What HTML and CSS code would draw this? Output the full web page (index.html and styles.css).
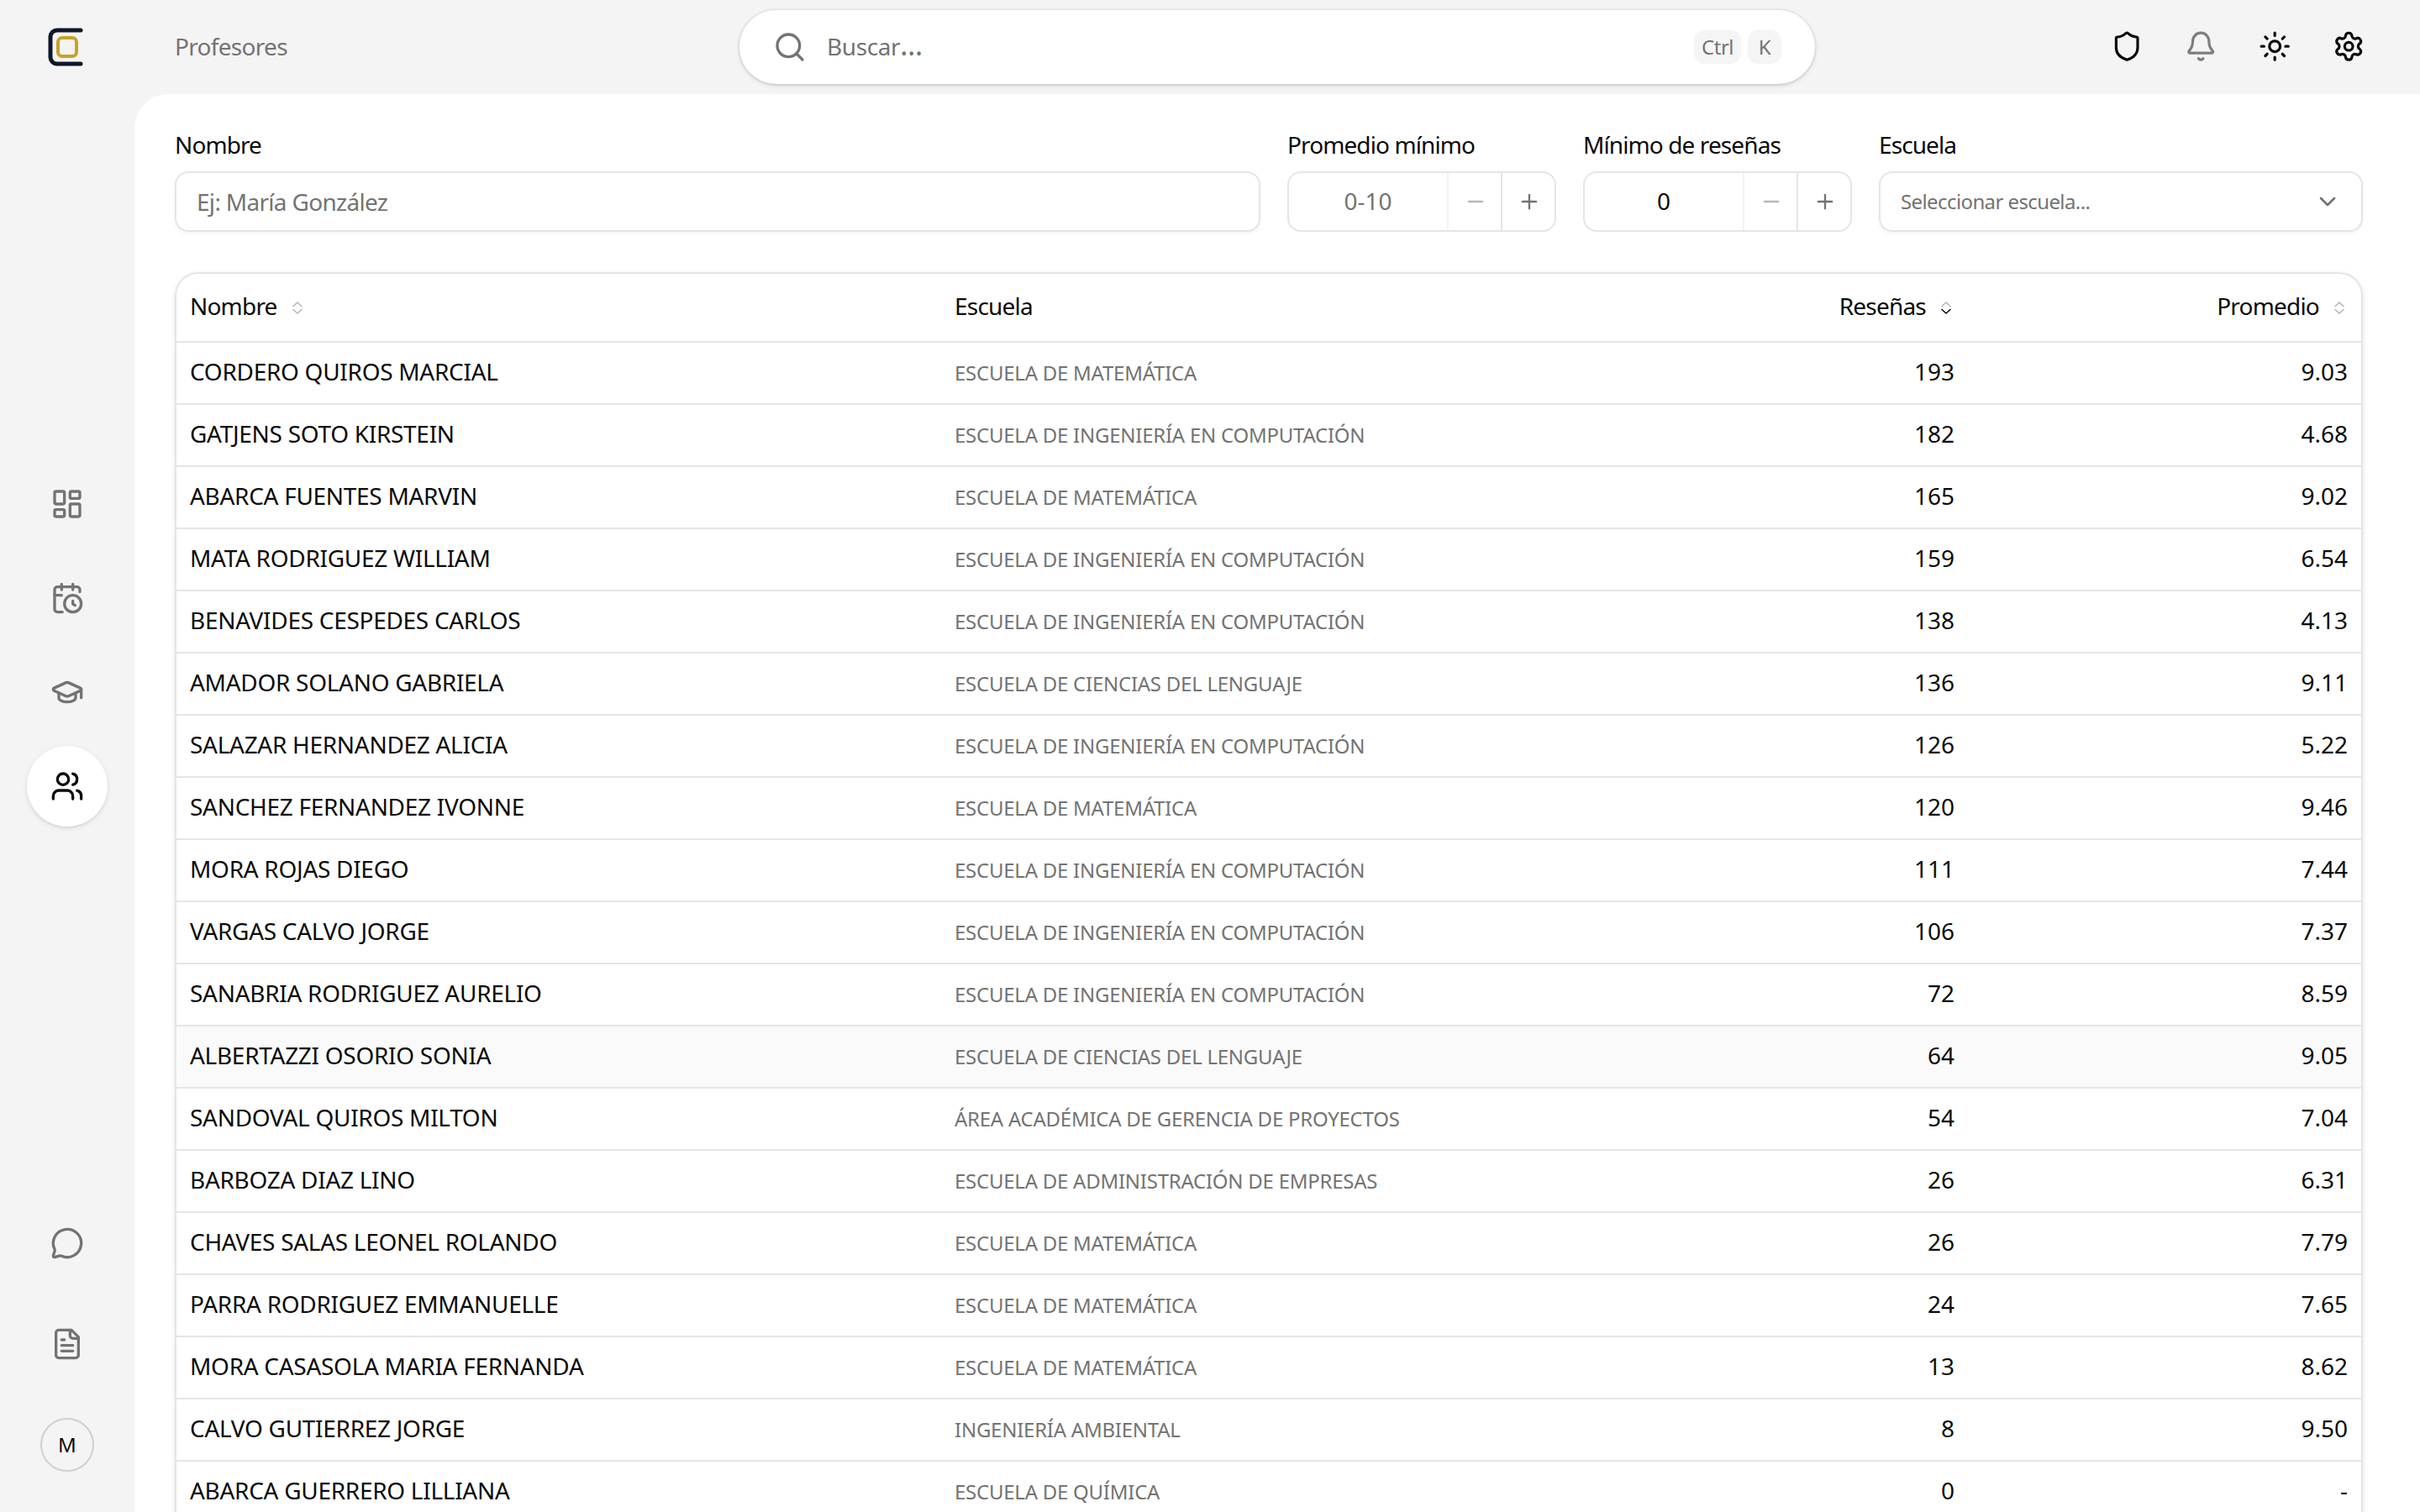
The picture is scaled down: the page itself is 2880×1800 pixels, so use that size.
FILE: index.html
```
<!DOCTYPE html>
<html lang="es">
<head>
    <meta charset="UTF-8">
    <meta name="viewport" content="width=device-width, initial-scale=1.0">
    <title>Profesores</title>
    <link rel="stylesheet" href="styles.css">
</head>
<body>
    <aside class="sidebar">
        <a class="logo" href="#">
            <svg width="48" height="48" viewBox="0 0 48 48" fill="none">
                <path d="M40 4H12a8 8 0 0 0-8 8v24a8 8 0 0 0 8 8h28" stroke="#0f172a" stroke-width="5" stroke-linecap="round"/>
                <rect x="13" y="13" width="22" height="22" rx="5" stroke="#c9a227" stroke-width="4"/>
            </svg>
        </a>
        <nav class="nav">
            <a class="nav-item" href="#">
                <svg class="icon" viewBox="0 0 24 24"><rect width="7" height="9" x="3" y="3" rx="1"/><rect width="7" height="5" x="14" y="3" rx="1"/><rect width="7" height="9" x="14" y="12" rx="1"/><rect width="7" height="5" x="3" y="16" rx="1"/></svg>
            </a>
            <a class="nav-item" href="#">
                <svg class="icon" viewBox="0 0 24 24"><path d="M16 14v2.200l1.600 1"/><path d="M16 2v4"/><path d="M21 7.500V6a2 2 0 0 0-2-2H5a2 2 0 0 0-2 2v14a2 2 0 0 0 2 2h3.500"/><path d="M3 10h5"/><path d="M8 2v4"/><circle cx="16" cy="16" r="6"/></svg>
            </a>
            <a class="nav-item" href="#">
                <svg class="icon" viewBox="0 0 24 24"><path d="M21.420 10.922a1 1 0 0 0-.019-1.838L12.830 5.180a2 2 0 0 0-1.660 0L2.600 9.080a1 1 0 0 0 0 1.832l8.570 3.908a2 2 0 0 0 1.660 0z"/><path d="M22 10v6"/><path d="M6 12.500V16a6 3 0 0 0 12 0v-3.500"/></svg>
            </a>
            <a class="nav-item active" href="#">
                <svg class="icon" viewBox="0 0 24 24"><path d="M16 21v-2a4 4 0 0 0-4-4H6a4 4 0 0 0-4 4v2"/><path d="M16 3.128a4 4 0 0 1 0 7.744"/><path d="M22 21v-2a4 4 0 0 0-3-3.870"/><circle cx="9" cy="7" r="4"/></svg>
            </a>
        </nav>
        <div class="sidebar-bottom">
            <a class="nav-item" href="#">
                <svg class="icon" viewBox="0 0 24 24"><path d="M2.992 16.342a2 2 0 0 1 .094 1.167l-1.065 3.290a1 1 0 0 0 1.236 1.168l3.413-.998a2 2 0 0 1 1.099.092 10 10 0 1 0-4.777-4.719"/></svg>
            </a>
            <a class="nav-item" href="#">
                <svg class="icon" viewBox="0 0 24 24"><path d="M15 2H6a2 2 0 0 0-2 2v16a2 2 0 0 0 2 2h12a2 2 0 0 0 2-2V7Z"/><path d="M14 2v4a2 2 0 0 0 2 2h4"/><path d="M10 9H8"/><path d="M16 13H8"/><path d="M16 17H8"/></svg>
            </a>
            <div class="avatar">M</div>
        </div>
    </aside>

    <div class="page">
        <header class="topbar">
            <div class="title">Profesores</div>
            <div class="search">
                <svg class="icon" viewBox="0 0 24 24"><path d="m21 21-4.340-4.340"/><circle cx="11" cy="11" r="8"/></svg>
                <span class="search-text">Buscar<span class="dots">…</span></span>
                <kbd>Ctrl</kbd>
                <kbd>K</kbd>
            </div>
            <div class="actions">
                <svg class="icon" viewBox="0 0 24 24"><path d="M20 13c0 5-3.500 7.500-7.660 8.950a1 1 0 0 1-.67-.01C7.500 20.500 4 18 4 13V6a1 1 0 0 1 1-1c2 0 4.500-1.200 6.240-2.720a1.170 1.170 0 0 1 1.520 0C14.510 3.810 17 5 19 5a1 1 0 0 1 1 1z"/></svg>
                <svg class="icon muted" viewBox="0 0 24 24"><path d="M10.268 21a2 2 0 0 0 3.464 0"/><path d="M3.262 15.326A1 1 0 0 0 4 17h16a1 1 0 0 0 .74-1.673C19.410 13.956 18 12.499 18 8A6 6 0 0 0 6 8c0 4.499-1.411 5.956-2.738 7.326"/></svg>
                <svg class="icon" viewBox="0 0 24 24"><circle cx="12" cy="12" r="4"/><path d="M12 2v2"/><path d="M12 20v2"/><path d="m4.930 4.930 1.410 1.410"/><path d="m17.660 17.660 1.410 1.410"/><path d="M2 12h2"/><path d="M20 12h2"/><path d="m6.340 17.660-1.410 1.410"/><path d="m19.070 4.930-1.410 1.410"/></svg>
                <svg class="icon" viewBox="0 0 24 24"><path d="M9.671 4.136a2.340 2.340 0 0 1 4.659 0 2.340 2.340 0 0 0 3.319 1.915 2.340 2.340 0 0 1 2.330 4.033 2.340 2.340 0 0 0 0 3.831 2.340 2.340 0 0 1-2.330 4.033 2.340 2.340 0 0 0-3.319 1.915 2.340 2.340 0 0 1-4.659 0 2.340 2.340 0 0 0-3.320-1.915 2.340 2.340 0 0 1-2.330-4.033 2.340 2.340 0 0 0 0-3.831A2.340 2.340 0 0 1 6.350 6.051a2.340 2.340 0 0 0 3.319-1.915"/><circle cx="12" cy="12" r="3"/></svg>
            </div>
        </header>

        <main class="content">
            <div class="filters">
                <div class="field">
                    <label>Nombre</label>
                    <div class="control">Ej: María González</div>
                </div>
                <div class="field">
                    <label>Promedio mínimo</label>
                    <div class="control stepper">
                        <span class="value">0-10</span>
                        <button class="disabled"><svg class="icon" viewBox="0 0 24 24"><path d="M5 12h14"/></svg></button>
                        <button><svg class="icon" viewBox="0 0 24 24"><path d="M5 12h14"/><path d="M12 5v14"/></svg></button>
                    </div>
                </div>
                <div class="field">
                    <label>Mínimo de reseñas</label>
                    <div class="control stepper">
                        <span class="value filled">0</span>
                        <button class="disabled"><svg class="icon" viewBox="0 0 24 24"><path d="M5 12h14"/></svg></button>
                        <button><svg class="icon" viewBox="0 0 24 24"><path d="M5 12h14"/><path d="M12 5v14"/></svg></button>
                    </div>
                </div>
                <div class="field">
                    <label>Escuela</label>
                    <div class="control select">
                        <span>Seleccionar escuela...</span>
                        <svg class="icon" viewBox="0 0 24 24"><path d="m6 9 6 6 6-6"/></svg>
                    </div>
                </div>
            </div>

            <div class="table-card">
                <table>
                    <thead>
                        <tr>
                            <th class="col-name">Nombre<svg class="sort" viewBox="0 0 12 15"><path d="m.500 6 5.500-5 5.500 5"/><path d="m.500 9 5.500 5 5.500-5"/></svg></th>
                            <th class="col-school">Escuela</th>
                            <th class="col-num">Reseñas<svg class="sort" viewBox="0 0 12 15"><path d="m.500 6 5.500-5 5.500 5"/><path class="on" d="m.500 9 5.500 5 5.500-5"/></svg></th>
                            <th class="col-num">Promedio<svg class="sort" viewBox="0 0 12 15"><path d="m.500 6 5.500-5 5.500 5"/><path d="m.500 9 5.500 5 5.500-5"/></svg></th>
                        </tr>
                    </thead>
                    <tbody>
                        <tr><td>CORDERO QUIROS MARCIAL</td><td>ESCUELA DE MATEMÁTICA</td><td>193</td><td>9.03</td></tr>
                        <tr><td>GATJENS SOTO KIRSTEIN</td><td>ESCUELA DE INGENIERÍA EN COMPUTACIÓN</td><td>182</td><td>4.68</td></tr>
                        <tr><td>ABARCA FUENTES MARVIN</td><td>ESCUELA DE MATEMÁTICA</td><td>165</td><td>9.02</td></tr>
                        <tr><td>MATA RODRIGUEZ WILLIAM</td><td>ESCUELA DE INGENIERÍA EN COMPUTACIÓN</td><td>159</td><td>6.54</td></tr>
                        <tr><td>BENAVIDES CESPEDES CARLOS</td><td>ESCUELA DE INGENIERÍA EN COMPUTACIÓN</td><td>138</td><td>4.13</td></tr>
                        <tr><td>AMADOR SOLANO GABRIELA</td><td>ESCUELA DE CIENCIAS DEL LENGUAJE</td><td>136</td><td>9.11</td></tr>
                        <tr><td>SALAZAR HERNANDEZ ALICIA</td><td>ESCUELA DE INGENIERÍA EN COMPUTACIÓN</td><td>126</td><td>5.22</td></tr>
                        <tr><td>SANCHEZ FERNANDEZ IVONNE</td><td>ESCUELA DE MATEMÁTICA</td><td>120</td><td>9.46</td></tr>
                        <tr><td>MORA ROJAS DIEGO</td><td>ESCUELA DE INGENIERÍA EN COMPUTACIÓN</td><td>111</td><td>7.44</td></tr>
                        <tr><td>VARGAS CALVO JORGE</td><td>ESCUELA DE INGENIERÍA EN COMPUTACIÓN</td><td>106</td><td>7.37</td></tr>
                        <tr><td>SANABRIA RODRIGUEZ AURELIO</td><td>ESCUELA DE INGENIERÍA EN COMPUTACIÓN</td><td>72</td><td>8.59</td></tr>
                        <tr class="hovered"><td>ALBERTAZZI OSORIO SONIA</td><td>ESCUELA DE CIENCIAS DEL LENGUAJE</td><td>64</td><td>9.05</td></tr>
                        <tr><td>SANDOVAL QUIROS MILTON</td><td>ÁREA ACADÉMICA DE GERENCIA DE PROYECTOS</td><td>54</td><td>7.04</td></tr>
                        <tr><td>BARBOZA DIAZ LINO</td><td>ESCUELA DE ADMINISTRACIÓN DE EMPRESAS</td><td>26</td><td>6.31</td></tr>
                        <tr><td>CHAVES SALAS LEONEL ROLANDO</td><td>ESCUELA DE MATEMÁTICA</td><td>26</td><td>7.79</td></tr>
                        <tr><td>PARRA RODRIGUEZ EMMANUELLE</td><td>ESCUELA DE MATEMÁTICA</td><td>24</td><td>7.65</td></tr>
                        <tr><td>MORA CASASOLA MARIA FERNANDA</td><td>ESCUELA DE MATEMÁTICA</td><td>13</td><td>8.62</td></tr>
                        <tr><td>CALVO GUTIERREZ JORGE</td><td>INGENIERÍA AMBIENTAL</td><td>8</td><td>9.50</td></tr>
                        <tr><td>ABARCA GUERRERO LILLIANA</td><td>ESCUELA DE QUÍMICA</td><td>0</td><td>-</td></tr>
                    </tbody>
                </table>
            </div>
        </main>
    </div>
</body>
</html>
```

FILE: styles.css
```
* {
    box-sizing: border-box;
    margin: 0;
    padding: 0;
}

body {
    display: flex;
    height: 1800px;
    overflow: hidden;
    background-color: #f4f4f4;
    color: #0a0a0a;
    font-family: "Noto Sans", sans-serif;
    font-size: 28px;
    line-height: 40px;
    letter-spacing: -0.7px;
}

a {
    color: inherit;
    text-decoration: none;
}

.icon {
    width: 40px;
    height: 40px;
    flex-shrink: 0;
    fill: none;
    stroke: currentColor;
    stroke-width: 2;
    stroke-linecap: round;
    stroke-linejoin: round;
}

.muted {
    opacity: 0.5;
}

/* Sidebar */
.sidebar {
    display: flex;
    flex-direction: column;
    align-items: center;
    width: 160px;
    flex-shrink: 0;
    color: #737373;
}

.logo {
    display: flex;
    align-items: center;
    justify-content: center;
    height: 112px;
}

.nav {
    display: flex;
    flex-direction: column;
    gap: 16px;
    margin-top: 440px;
}

.nav-item {
    display: flex;
    align-items: center;
    justify-content: center;
    width: 96px;
    height: 96px;
    border-radius: 50%;
}

.nav-item.active {
    background-color: #fff;
    color: #0a0a0a;
    box-shadow: 0 2px 6px rgba(0, 0, 0, 0.1), 0 2px 4px -2px rgba(0, 0, 0, 0.1);
}

.sidebar-bottom {
    display: flex;
    flex-direction: column;
    align-items: center;
    gap: 24px;
    margin-top: auto;
    padding-bottom: 48px;
}

.avatar {
    display: flex;
    align-items: center;
    justify-content: center;
    width: 64px;
    height: 64px;
    margin-top: 16px;
    border: 2px solid #d0d0d0;
    border-radius: 50%;
    color: #0a0a0a;
    font-size: 24px;
    letter-spacing: 0;
}

/* Top bar */
.page {
    display: flex;
    flex-direction: column;
    flex: 1;
    min-width: 0;
}

.topbar {
    display: grid;
    grid-template-columns: 1fr 1280px 1fr;
    align-items: center;
    height: 112px;
    flex-shrink: 0;
    padding: 0 48px;
}

.title {
    padding-bottom: 3px;
    color: #737373;
}

.search {
    display: flex;
    align-items: center;
    height: 88px;
    padding: 0 40px;
    border-radius: 44px;
    background-color: #fff;
    color: #737373;
    box-shadow: 0 0 0 2px rgba(0, 0, 0, 0.04), 0 2px 6px rgba(0, 0, 0, 0.1), 0 2px 4px -2px rgba(0, 0, 0, 0.1);
}

.search-text {
    flex: 1;
    margin-left: 24px;
    padding-bottom: 3px;
    letter-spacing: -0.4px;
}

.dots {
    font-size: 34px;
    line-height: 1;
}

kbd {
    min-width: 40px;
    height: 40px;
    margin-left: 8px;
    padding: 0 9px;
    border-radius: 12px;
    background-color: #f5f5f5;
    font-family: inherit;
    font-size: 24px;
    line-height: 39px;
    letter-spacing: -0.5px;
    text-align: center;
}

.actions {
    display: flex;
    justify-content: flex-end;
    gap: 49.6px;
    margin-right: 17.8px;
    padding-bottom: 2px;
}

.actions .icon {
    width: 38.4px;
    height: 38.4px;
}

/* Content */
.content {
    flex: 1;
    min-height: 0;
    overflow: hidden;
    padding: 40px 68px 0 48px;
    border-top-left-radius: 40px;
    background-color: #fff;
}

.filters {
    display: grid;
    grid-template-columns: 1292px 320px 320px 576px;
    gap: 32px;
    margin-bottom: 48px;
}

.field label {
    display: block;
    margin-bottom: 12px;
    letter-spacing: -0.9px;
}

.control {
    display: flex;
    align-items: center;
    height: 72px;
    padding: 0 24px;
    border: 2px solid #e5e5e5;
    border-radius: 16px;
    color: #737373;
    box-shadow: 0 2px 4px rgba(0, 0, 0, 0.05);
}

.stepper {
    align-items: stretch;
    padding: 0;
    box-shadow: none;
}

.stepper .value {
    flex: 1;
    line-height: 67px;
    letter-spacing: 0;
    text-align: center;
}

.stepper .filled {
    color: #0a0a0a;
}

.stepper button {
    display: flex;
    align-items: center;
    justify-content: center;
    width: 64px;
    padding-left: 2px;
    border: none;
    border-left: 2px solid #e5e5e5;
    background: none;
    color: inherit;
}

.stepper .icon {
    width: 28px;
    height: 28px;
}

.stepper .disabled {
    opacity: 0.5;
}

.select {
    justify-content: space-between;
    font-size: 24px;
    letter-spacing: -0.6px;
}

.select .icon {
    width: 32px;
    height: 32px;
}

/* Table */
.table-card {
    overflow: hidden;
    height: 1600px;
    border: 2px solid #e5e5e5;
    border-radius: 28px;
    box-shadow: 0 2px 6px rgba(0, 0, 0, 0.1), 0 2px 4px -2px rgba(0, 0, 0, 0.1);
}

table {
    width: 100%;
    table-layout: fixed;
    border-collapse: separate;
    border-spacing: 0;
}

th,
td {
    border-bottom: 2px solid #e5e5e5;
    padding: 0 16px 4px;
    text-align: left;
    white-space: nowrap;
}

th {
    height: 82px;
    font-weight: 400;
    letter-spacing: -0.8px;
}

td {
    height: 74px;
    letter-spacing: -0.3px;
}

.col-name {
    width: 35%;
}

.col-school {
    width: 29%;
}

.col-num {
    width: 18%;
}

td:nth-child(2) {
    padding-bottom: 1px;
    color: #737373;
    font-size: 24px;
    letter-spacing: -0.25px;
}

.col-num,
td:nth-child(3),
td:nth-child(4) {
    text-align: right;
}

td:nth-child(3),
td:nth-child(4) {
    letter-spacing: 0;
}

.sort {
    width: 12px;
    height: 15px;
    margin: 0 4px 0 18px;
    vertical-align: 1px;
    fill: none;
    stroke: #b5b5b5;
    stroke-width: 1.5;
}

.sort .on {
    stroke: #0a0a0a;
}

.hovered {
    background-color: #fafafa;
}
```
